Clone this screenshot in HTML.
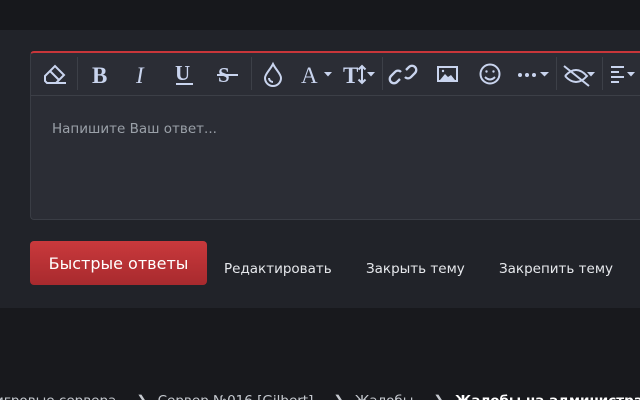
<!DOCTYPE html>
<html><head><meta charset="utf-8"><style>
*{margin:0;padding:0;box-sizing:border-box}
body{width:640px;height:400px;overflow:hidden;background:#18191d;font-family:"DejaVu Sans","Liberation Sans",sans-serif;position:relative}
.top{position:absolute;left:0;top:0;width:640px;height:30px;background:#17181c}
.main{position:absolute;left:0;top:30px;width:640px;height:278px;background:#212329}
.ed{position:absolute;left:30px;top:51px;width:610px;height:169px;background:#2b2d35;border:1px solid #3a3d45;border-right:none;border-top:2px solid #c8363a;border-radius:4px 0 0 4px;overflow:hidden}
.tb{height:43px;border-bottom:1px solid #3c3f47;position:relative}
.tb svg{position:absolute;top:0;left:-1px}
.sep{position:absolute;top:4px;width:1px;height:33px;background:#3d4048}
.ph{position:absolute;left:21px;top:68px;font-size:13.5px;color:#9aa0a8}
.btn{position:absolute;left:30px;top:241px;width:177px;height:44px;border-radius:4px;background:linear-gradient(#c9393c,#a82a2e);color:#fff;font-size:16px;line-height:45px;text-align:center}
.lk{position:absolute;top:261px;font-size:13.5px;color:#e6e8ec}
.bc{position:absolute;top:393px;left:0;width:640px;height:7px;overflow:hidden}
.bc div{font-size:13.5px;color:#c6cad0;white-space:nowrap;margin-left:-5px}
.bc i{font-style:normal;font-weight:bold;display:inline-block;margin:0 10px 0 20px}
</style></head><body>
<div class="top"></div>
<div class="main"></div>
<div class="ed">
<div class="tb">
<svg width="610" height="43" viewBox="0 0 610 43" fill="none" stroke="#c9d4ee" stroke-width="2" font-family="Liberation Serif,serif">
<g transform="translate(-30,-53)">
<path d="M45 76 L55 66 L64 75 L56 83 L47 83 L45 81 Z M50 71 L59 80 M56 83 L66 83"/>
<text x="92" y="83" font-size="23" fill="#c9d4ee" stroke="none" font-weight="bold">B</text>
<text x="136" y="83" font-size="23" fill="#c9d4ee" stroke="none" font-style="italic">I</text>
<text x="175" y="80" font-size="21" fill="#c9d4ee" stroke="none" font-weight="bold">U</text><path d="M176 84 H193"/>
<text x="218" y="82" font-size="21" fill="#c9d4ee" stroke="none" font-weight="bold">S</text><path d="M217 75 H238"/>
<path d="M273 64 C270 70 265 74 265 78 A8 8 0 0 0 281 78 C281 74 276 70 273 64 Z M269 78 a4 4 0 0 0 4 4"/>
<text x="301" y="83" font-size="23" fill="#c9d4ee" stroke="none">A</text><path d="M324 72 h8 l-4 4.5z" fill="#c9d4ee" stroke="none"/>
<text x="343" y="83" font-size="23" fill="#c9d4ee" stroke="none" font-weight="bold">T</text><path d="M362 66 V83 M358.5 69.5 l3.5 -3.5 3.5 3.5 M358.5 79.5 l3.5 3.5 3.5 -3.5"/><path d="M367 72 h8 l-4 4.5z" fill="#c9d4ee" stroke="none"/>
<path d="M400 79 l-3 3 a4 4 0 0 1 -6 -6 l4 -4 a4 4 0 0 1 6 0 M406 70 l3 -3 a4 4 0 0 1 6 6 l-4 4 a4 4 0 0 1 -6 0" stroke-width="2.3"/>
<rect x="438" y="67" width="19" height="14"/><path d="M440 80 l5 -6 3 3 3 -2 4 5z" fill="#c9d4ee" stroke="none"/><circle cx="443" cy="71" r="1.2" fill="#c9d4ee" stroke="none"/>
<circle cx="490" cy="74" r="9.5"/><circle cx="486.5" cy="71.5" r="1.2" fill="#c9d4ee" stroke="none"/><circle cx="493.5" cy="71.5" r="1.2" fill="#c9d4ee" stroke="none"/><path d="M485 77 q5 5 10 0"/>
<circle cx="520" cy="75" r="2" fill="#c9d4ee" stroke="none"/><circle cx="527" cy="75" r="2" fill="#c9d4ee" stroke="none"/><circle cx="534" cy="75" r="2" fill="#c9d4ee" stroke="none"/><path d="M540 72 h9 l-4.5 4.5z" fill="#c9d4ee" stroke="none"/>
<path d="M565 76 q11 -12 22 0 q-11 12 -22 0 M564 66 L589 86"/><path d="M587 72 h8 l-4 4.5z" fill="#c9d4ee" stroke="none"/>
<path d="M611 67 H624 M611 72 H619 M611 77 H624 M611 82 H619"/><path d="M627 72 h8 l-4 4.5z" fill="#c9d4ee" stroke="none"/>
</g></svg>
<div class="sep" style="left:46px"></div>
<div class="sep" style="left:220px"></div>
<div class="sep" style="left:351px"></div>
<div class="sep" style="left:525px"></div>
<div class="sep" style="left:571px"></div>
</div>
<div class="ph">Напишите Ваш ответ...</div>
</div>
<div class="btn">Быстрые ответы</div>
<div class="lk" style="left:224px">Редактировать</div>
<div class="lk" style="left:366px">Закрыть тему</div>
<div class="lk" style="left:499px">Закрепить тему</div>
<div class="bc"><div>игровые сервера<i>❯</i>Сервер №016 [Gilbert]<i>❯</i>Жалобы<i>❯</i><b style="color:#fff">Жалобы на администрацию</b></div></div>
</body></html>
